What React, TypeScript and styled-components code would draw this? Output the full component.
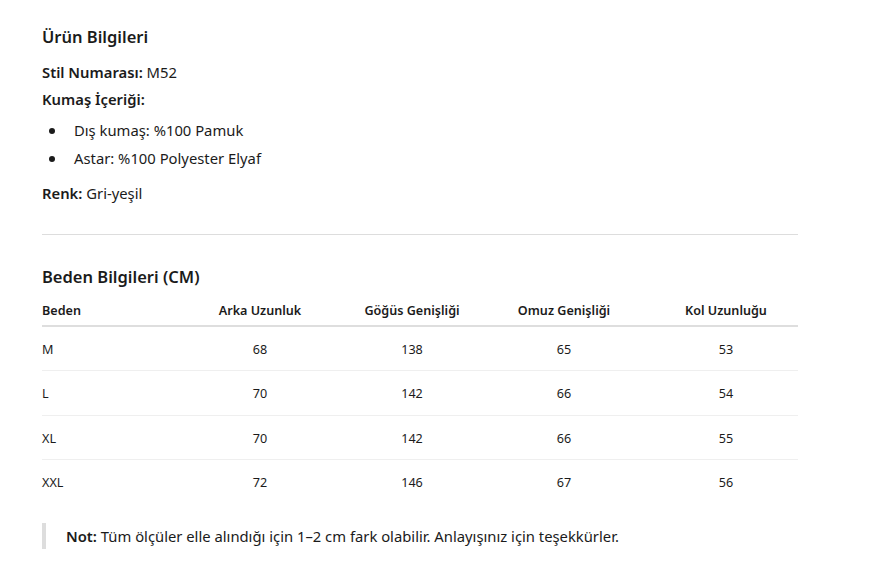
import React from "react";
import styled, { createGlobalStyle } from "styled-components";

const Global = createGlobalStyle`
  html, body { margin: 0; padding: 0; background: #ffffff; }
  body { font-family: "Noto Sans", "Open Sans", sans-serif; color: #1b1b1b; }
`;

const Page = styled.div`
  width: 756px;
  padding: 23px 34px 30px 42px;
`;

const Title = styled.h3`
  margin: 0;
  font-size: 16.5px;
  line-height: 28px;
  font-weight: 600;
  color: #1b1b1b;
`;

const Para = styled.p<{ $top?: number }>`
  margin: ${(p) => p.$top ?? 0}px 0 0;
  font-size: 14.8px;
  line-height: 24px;
`;

const Label = styled.strong`
  font-weight: 600;
`;

const List = styled.ul`
  margin: 7px 0 0;
  padding-left: 32px;
  list-style: none;
  font-size: 14.8px;
  line-height: 24px;
`;

const Item = styled.li`
  position: relative;
  margin: 0 0 4px;
  &::before {
    content: "";
    position: absolute;
    left: -25px;
    top: 10px;
    width: 6px;
    height: 6px;
    border-radius: 50%;
    background: #1b1b1b;
  }
`;

const Rule = styled.hr`
  border: none;
  border-top: 1px solid #dddddd;
  margin: 29px 0 28px;
`;

const Table = styled.table`
  width: 756px;
  border-collapse: collapse;
  table-layout: fixed;
  margin-top: 6px;
  font-size: 12.6px;
`;

const HeadCell = styled.th<{ $left?: boolean }>`
  font-weight: 600;
  text-align: ${(p) => (p.$left ? "left" : "center")};
  padding: 5px 0 5px;
  line-height: 18px;
  border-bottom: 2px solid #dedede;
  color: #1b1b1b;
`;

const Row = styled.tr<{ $last?: boolean }>`
  border-bottom: ${(p) => (p.$last ? "none" : "1px solid #efefef")};
`;

const Cell = styled.td<{ $left?: boolean }>`
  text-align: ${(p) => (p.$left ? "left" : "center")};
  padding: 13px 0 11px;
  line-height: 19.3px;
  color: #1b1b1b;
`;

const Note = styled.blockquote`
  margin: 20px 0 0;
  padding: 2px 0 2px 20px;
  border-left: 4px solid #dddddd;
  font-size: 14.8px;
  line-height: 22px;
`;

const widths = [128, 180, 124, 180, 144];
const headers = ["Beden", "Arka Uzunluk", "Göğüs Genişliği", "Omuz Genişliği", "Kol Uzunluğu"];
const rows = [
  ["M", "68", "138", "65", "53"],
  ["L", "70", "142", "66", "54"],
  ["XL", "70", "142", "66", "55"],
  ["XXL", "72", "146", "67", "56"],
];

export default function App() {
  return (
    <>
      <Global />
      <Page>
        <Title>Ürün Bilgileri</Title>
        <Para $top={9}>
          <Label>Stil Numarası:</Label> M52
        </Para>
        <Para $top={3}>
          <Label>Kumaş İçeriği:</Label>
        </Para>
        <List>
          <Item>Dış kumaş: %100 Pamuk</Item>
          <Item>Astar: %100 Polyester Elyaf</Item>
        </List>
        <Para $top={11}>
          <Label>Renk:</Label> Gri-yeşil
        </Para>
        <Rule />
        <Title>Beden Bilgileri (CM)</Title>
        <Table>
          <colgroup>
            {widths.map((w, i) => (
              <col key={i} style={{ width: w }} />
            ))}
          </colgroup>
          <thead>
            <tr>
              {headers.map((h, i) => (
                <HeadCell key={h} $left={i === 0}>
                  {h}
                </HeadCell>
              ))}
            </tr>
          </thead>
          <tbody>
            {rows.map((r, ri) => (
              <Row key={r[0]} $last={ri === rows.length - 1}>
                {r.map((c, ci) => (
                  <Cell key={ci} $left={ci === 0}>
                    {c}
                  </Cell>
                ))}
              </Row>
            ))}
          </tbody>
        </Table>
        <Note>
          <Label>Not:</Label> Tüm ölçüler elle alındığı için 1–2 cm fark olabilir. Anlayışınız için teşekkürler.
        </Note>
      </Page>
    </>
  );
}
